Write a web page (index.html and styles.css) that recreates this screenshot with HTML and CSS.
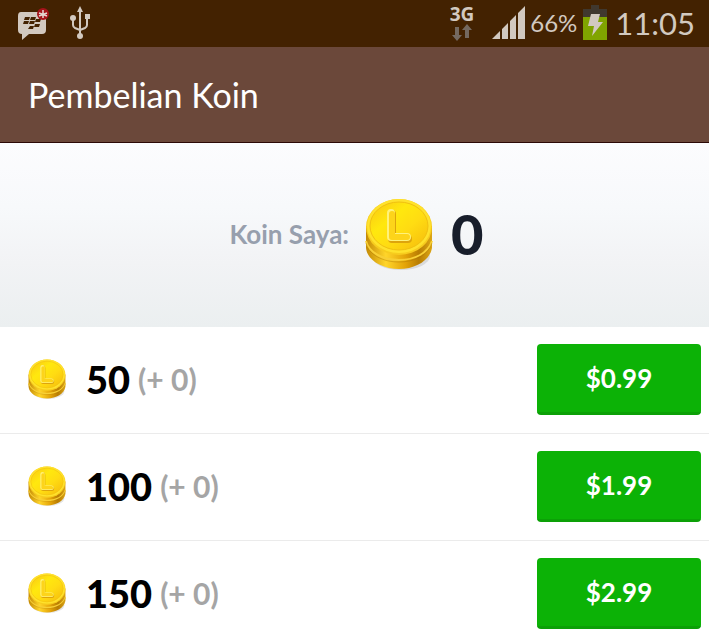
FILE: index.html
```html
<!DOCTYPE html>
<html lang="id">
  <head>
    <meta charset="utf-8">
    <meta name="viewport" content="width=device-width, initial-scale=1">
    <title>Pembelian Koin</title>
    <link rel="stylesheet" href="styles.css">
  </head>
  <body>
  <svg class="defs" aria-hidden="true">
    <defs>
      <linearGradient id="face" x1="0" y1="0" x2="1" y2="1">
        <stop offset="0" stop-color="#f9c514"/>
        <stop offset=".35" stop-color="#ffe80e"/>
        <stop offset=".6" stop-color="#ffdc12"/>
        <stop offset="1" stop-color="#f5b90c"/>
      </linearGradient>
      <linearGradient id="rim" x1="0" y1="0" x2="1" y2="0">
        <stop offset="0" stop-color="#c48a05"/>
        <stop offset=".3" stop-color="#ffd52a"/>
        <stop offset=".6" stop-color="#e3a308"/>
        <stop offset=".8" stop-color="#b87d03"/>
        <stop offset="1" stop-color="#dca615"/>
      </linearGradient>
      <symbol id="coin" viewBox="0 0 68 74">
        <ellipse cx="36" cy="59" rx="29" ry="14" fill="#000" opacity=".1"/>
        <path d="M1 29v22c1 12 16 21 33 21s31-9 33-21V29z" fill="url(#rim)"/>
        <path d="M1 44c3 12 17 19 33 19s29-7 33-19" fill="none" stroke="#f8cf35" stroke-width="2"/>
        <path d="M1 46c3 12 17 19 33 19s29-7 33-19" fill="none" stroke="#a87404" stroke-width="1" opacity=".4"/>
        <ellipse cx="34" cy="30" rx="33" ry="28" fill="#f7cc1e"/>
        <ellipse cx="34" cy="29" rx="32" ry="27" fill="#ffe22c"/>
        <ellipse cx="34" cy="29" rx="29" ry="24" fill="url(#face)" stroke="#f0c010"/>
        <path d="M27 17v25h16" fill="none" stroke="#dda40c" stroke-width="8" stroke-linecap="round" stroke-linejoin="round"/>
        <path d="M26 16v24h16" fill="none" stroke="#fff27a" stroke-width="8" stroke-linecap="round" stroke-linejoin="round"/>
        <path d="M27 17v23h15" fill="none" stroke="#fdd41a" stroke-width="6" stroke-linecap="round" stroke-linejoin="round"/>
      </symbol>
    </defs>
  </svg>

  <div class="status">
    <svg class="bbm" viewBox="0 0 34 34">
      <path d="M5 6h20q5 0 5 4v14q0 4-4 4H13l-7 6v-6q-4 0-4-4V10q0-4 3-4z" fill="#d2c9c0"/>
      <g fill="#432201">
        <path d="M9 11h5l-1 3H8zM15 11h5l-1 3h-5zM8 15h5l-1 3H7zM14 15h5l-1 3h-5zM20 13h5l-1 3h-5zM19 18h5l-1 3h-5zM14 20h4l-1 3h-5z"/>
      </g>
      <circle cx="27" cy="8" r="6" fill="#a5131a"/>
      <path d="M27 4v8M23 7l8 3M31 7l-8 3" stroke="#e5d8d3" stroke-width="1.5"/>
    </svg>
    <svg class="usb" viewBox="0 0 22 36">
      <g fill="none" stroke="#d2c9c0" stroke-width="2">
        <path d="M11 5v26M4 14v6q0 2 2 3l5 2M18 12v8q0 2-2 3l-5 2"/>
      </g>
      <path d="M11 1l3 6H8zM16 9h5v5h-5z" fill="#d2c9c0"/>
      <circle cx="4" cy="13" r="3" fill="#d2c9c0"/>
      <circle cx="11" cy="31" r="3" fill="#d2c9c0"/>
    </svg>
    <div class="network">
      <span>3G</span>
      <svg viewBox="0 0 20 17">
        <path d="M3 3h4v8h3l-5 6-5-6h3zM13 14h4V6h3l-5-6-5 6h3z" fill="#746960"/>
      </svg>
    </div>
    <svg class="signal" viewBox="0 0 33 33">
      <path d="M0 33l8-8v8zM10 33V23l6-6v16zM18 33V15l6-6v24zM26 33V7l7-7v33z" fill="#d2c9c0"/>
    </svg>
    <span class="percent">66%</span>
    <svg class="battery" viewBox="0 0 24 35">
      <path d="M8 0h8v4h8v8H0V4h8z" fill="#40382f"/>
      <path d="M0 12h24v23H0z" fill="#80a400"/>
      <path d="M8 9h9l-2 8h5L9 31l2-10H5z" fill="#d2c9c0"/>
    </svg>
    <span class="clock">11:05</span>
  </div>

  <header class="title">
    <h1>Pembelian Koin</h1>
  </header>

  <section class="balance">
    <span class="balance-label">Koin Saya:</span>
    <svg class="coin-big"><use href="#coin"/></svg>
    <span class="balance-count">0</span>
  </section>

  <ul class="offers">
    <li>
      <svg class="coin"><use href="#coin"/></svg>
      <span class="amount">50</span>
      <span class="bonus">(+ 0)</span>
      <button type="button">$0.99</button>
    </li>
    <li>
      <svg class="coin"><use href="#coin"/></svg>
      <span class="amount">100</span>
      <span class="bonus">(+ 0)</span>
      <button type="button">$1.99</button>
    </li>
    <li>
      <svg class="coin"><use href="#coin"/></svg>
      <span class="amount">150</span>
      <span class="bonus">(+ 0)</span>
      <button type="button">$2.99</button>
    </li>
  </ul>
  </body>
</html>
```
FILE: styles.css
```css
* {
  box-sizing: border-box;
  }
body {
  display: flex;
  flex-direction: column;
  height: 100vh;
  margin: 0;
  background: white;
  color: black;
  font-family: Lato, "Open Sans", sans-serif;
  }
svg {
  flex: none;
  display: block;
  }
.defs {
  position: absolute;
  width: 0;
  height: 0;
  }

/* phone status bar */
.status {
  flex: none;
  display: flex;
  align-items: center;
  height: 47px;
  padding: 0 14px 2px 16px;
  background: #432201;
  color: #d2c9c0;
  }
.bbm {
  width: 34px;
  height: 34px;
  }
.usb {
  width: 22px;
  height: 36px;
  margin-left: 19px;
  }
.network {
  margin-left: auto;
  margin-right: 18px;
  font: bold 19px/19px "Open Sans", sans-serif;
  }
.network svg {
  width: 20px;
  height: 17px;
  margin: 0 auto;
  }
.signal {
  width: 33px;
  height: 33px;
  margin-right: 5px;
  }
.percent {
  font-size: 24px;
  line-height: 32px;
  }
.battery {
  width: 24px;
  height: 35px;
  margin: 0 8px 0 6px;
  }
.clock {
  font-size: 31px;
  line-height: 32px;
  }

.title {
  flex: none;
  display: flex;
  align-items: center;
  height: 96px;
  padding: 0 28px;
  border-bottom: 1px solid #2b0906;
  background: #6b483a;
  color: white;
  }
.title h1 {
  margin: 0;
  font-size: 34px;
  line-height: 40px;
  font-weight: normal;
  }

.balance {
  flex: none;
  display: flex;
  align-items: center;
  justify-content: center;
  height: 184px;
  padding: 0 0 2px 4px;
  background: linear-gradient(#fcfcfe, #f7f9fb 35%, #f2f3f5 65%, #ebeff0);
  }
.balance-label {
  color: #979fad;
  font-size: 26px;
  line-height: 32px;
  font-weight: bold;
  }
.coin-big {
  width: 68px;
  height: 74px;
  margin: 0 18px 0 16px;
  }
.balance-count {
  color: #181e2b;
  font-size: 56px;
  line-height: 64px;
  font-weight: 900;
  }

.offers {
  flex: 1;
  min-height: 0;
  margin: 0;
  padding: 0;
  overflow: hidden;
  list-style: none;
  }
.offers li {
  display: flex;
  align-items: center;
  height: 107px;
  padding: 0 8px 2px 28px;
  border-bottom: 1px solid #ebebeb;
  }
.coin {
  width: 38px;
  height: 42px;
  margin-right: 20px;
  }
.amount {
  font-size: 38px;
  line-height: 48px;
  font-weight: 900;
  }
.bonus {
  margin-left: 8px;
  color: #a5a5a5;
  font-size: 30px;
  line-height: 48px;
  font-weight: bold;
  }
.offers button {
  width: 164px;
  height: 71px;
  margin-left: auto;
  padding: 0;
  border: 0;
  border-bottom: 3px solid #0ca007;
  border-radius: 4px;
  background: #0cb206;
  color: white;
  font: bold 26px/32px Lato, "Open Sans", sans-serif;
  }
```
